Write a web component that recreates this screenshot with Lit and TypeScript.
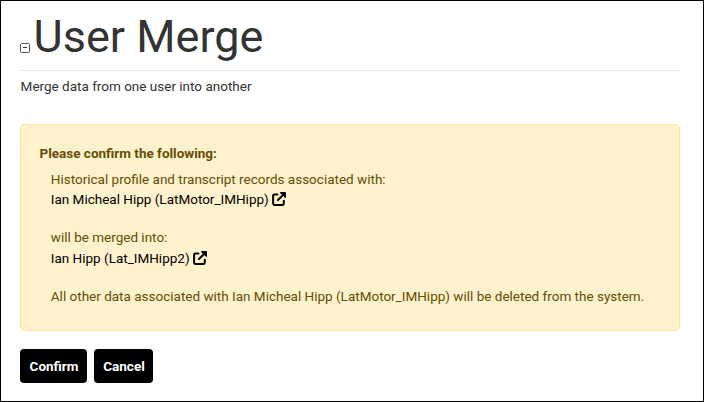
import { LitElement, html, css, svg } from "lit";
import { customElement } from "lit/decorators.js";

const external = svg`<path d="M5.4 2.4H2.5A1.3 1.3 0 0 0 1.1 3.7v7.9a1.3 1.3 0 0 0 1.4 1.3h8a1.3 1.3 0 0 0 1.3-1.3V8.8" fill="none" stroke="#000" stroke-width="2" stroke-linecap="round" stroke-linejoin="round"/><path d="M12.4 1.6L6 8" stroke="#000" stroke-width="2" stroke-linecap="round"/><path d="M8.4 0H13.2Q14 0 14 .8V5.5Q13.6 6.2 12.8 5.6L8.4 1.3Q7.7 .4 8.4 0Z" fill="#000"/>`;

@customElement("app-root")
export class AppRoot extends LitElement {
  static styles = css`
    :host { display: block; box-sizing: border-box; width: 704px; height: 402px; border: 1px solid #000; padding: 9px 23px 0 19px; background: #fff; color: #333; font: 13.5px/19.5px Roboto, sans-serif; overflow: hidden; }
    * { box-sizing: border-box; }
    header { display: flex; align-items: flex-start; height: 61px; border-bottom: 1px solid #eaeaea; }
    .toggle { width: 10px; height: 10px; margin: 33px 3.6px 0 0; flex: none; }
    h1 { margin: 0; font-size: 45px; line-height: 54px; font-weight: 400; white-space: nowrap; }
    .lead { margin: 6px 0 0 .6px; }
    .notice { height: 207px; margin-top: 27.5px; padding: 19px 18.5px; border: 1px solid #ffe69c; border-radius: 4px; background: #fff2cd; color: #664d03; }
    .body { padding-left: 11.3px; margin-top: 6px; }
    .row { height: 19.5px; white-space: nowrap; }
    .gap { margin-top: 19.5px; }
    .user { color: #000; display: flex; align-items: center; gap: 3px; }
    .user span { padding-top: 2.2px; }
    .user svg { margin-top: .6px; }
    .actions { display: flex; gap: 7px; margin-top: 18px; }
    button { height: 34px; padding: 0 0 0 1px; border: 0; border-radius: 4px; background: #000; color: #fff; font: 700 13.5px Roboto, sans-serif; }
    .confirm { width: 67px; }
    .cancel { width: 59px; }
  `;
  user(name: string) {
    return html`<div class="row user"><span>${name}</span><svg width="14" height="14" viewBox="0 0 14 14">${external}</svg></div>`;
  }
  render() {
    return html`
      <header><svg class="toggle" viewBox="0 0 10 10"><rect x=".5" y=".5" width="9" height="9" rx="1" fill="#fff" stroke="#555"/><path d="M3 4.5h4" stroke="#333"/></svg><h1>User Merge</h1></header>
      <div class="lead">Merge data from one user into another</div>
      <section class="notice"><b>Please confirm the following:</b>
        <div class="body"><div class="row">Historical profile and transcript records associated with:</div>
        ${this.user("Ian Micheal Hipp (LatMotor_IMHipp)")}
        <div class="row gap">will be merged into:</div>
        ${this.user("Ian Hipp (Lat_IMHipp2)")}
        <div class="row gap">All other data associated with Ian Micheal Hipp (LatMotor_IMHipp) will be deleted from the system.</div></div>
      </section>
      <div class="actions"><button class="confirm">Confirm</button><button class="cancel">Cancel</button></div>`;
  }
}
